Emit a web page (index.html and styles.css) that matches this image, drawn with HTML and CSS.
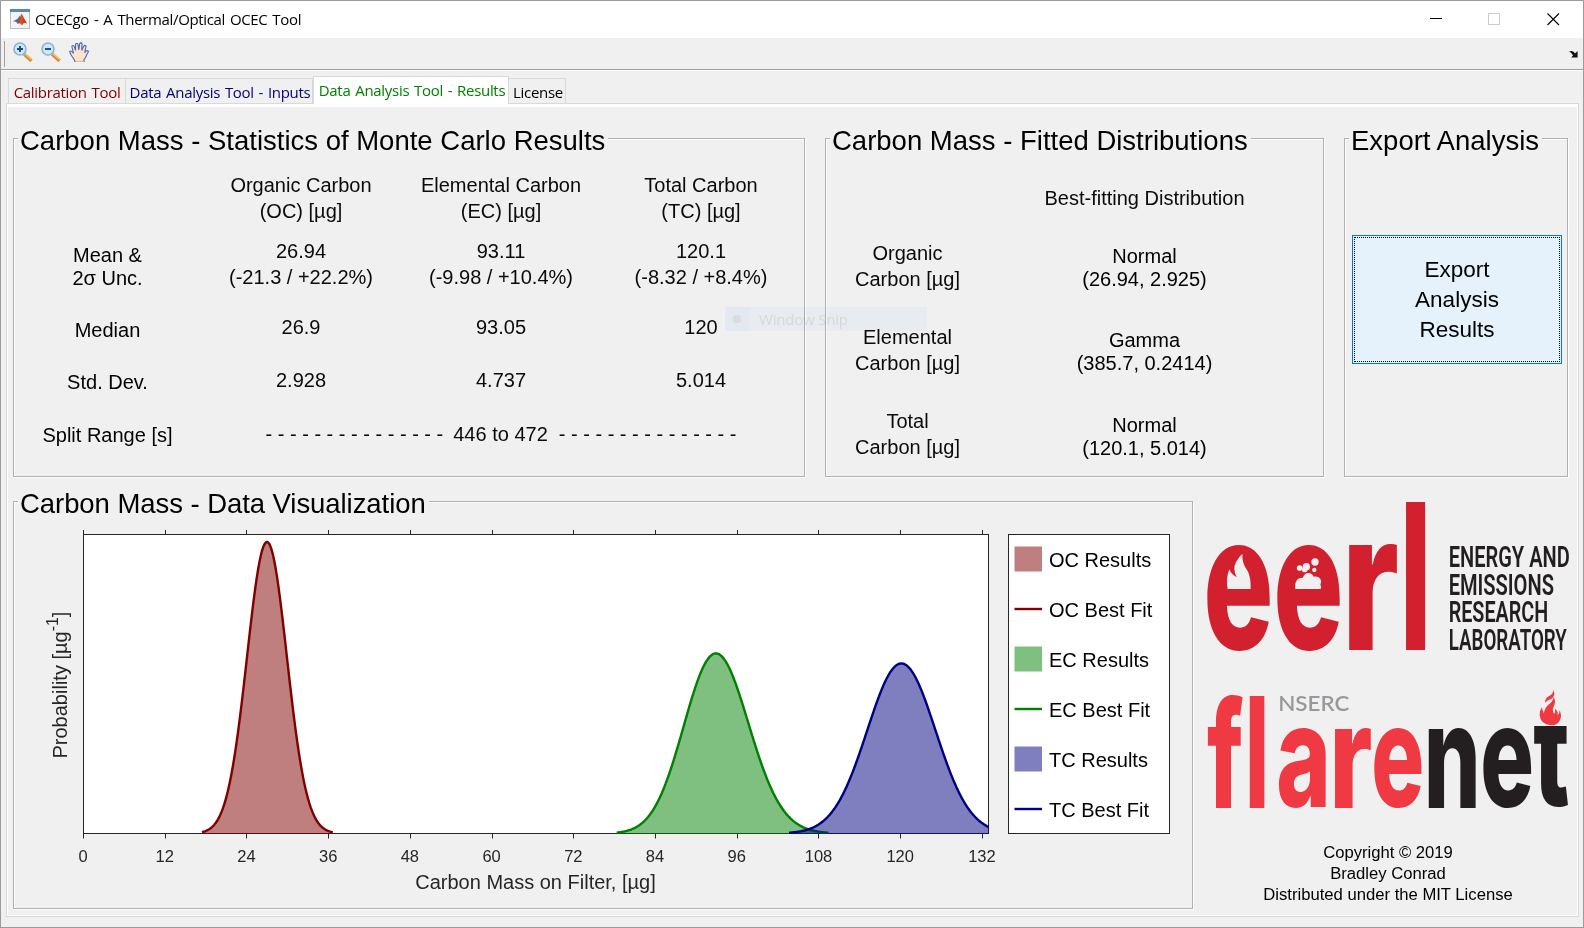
FILE: index.html
```html
<!DOCTYPE html>
<html lang="en">
<head>
<meta charset="utf-8">
<title>OCECgo - A Thermal/Optical OCEC Tool</title>
<link rel="stylesheet" href="styles.css">
</head>
<body>
<div class="window">
  <header class="titlebar">
    <svg class="app-icon" viewBox="0 0 20 20" width="20" height="20">
      <defs><linearGradient id="peak" x1="0" x2="1" y1="0" y2="0"><stop offset="0" stop-color="#b8311c"/><stop offset=".45" stop-color="#e0531e"/><stop offset="1" stop-color="#a3230f"/></linearGradient></defs>
      <rect x=".5" y=".5" width="19" height="19" fill="#f3f4f5" stroke="#b4bcc4"/>
      <rect x="0" y="0" width="20" height="3" fill="#5e87ae"/>
      <path d="M3 12.2 7.4 10 10 6.5 10.6 12 8 14.6 5.8 12.8z" fill="#2f74b5"/>
      <path d="M7 14.4c2-1.5 2.800-6.500 4.600-9.800 1.600 2.600 3.400 7 5.600 10.200-2.600-2-3.600-.8-5.400 1.800-.8-1.600-1.600-2.400-3-2.200z" fill="url(#peak)"/>
    </svg>
    <span class="title">OCECgo - A Thermal/Optical OCEC Tool</span>
    <svg class="controls" viewBox="0 0 130 14" width="130" height="14">
      <path d="M0 6.500h12" stroke="#000"/>
      <rect x="58.500" y="1.500" width="11" height="11" fill="none" stroke="#ccc"/>
      <path d="M117.500 1.500l11.500 11.500M129 1.500L117.500 13" stroke="#000" stroke-width="1.100"/>
    </svg>
  </header>

  <div class="toolbar">
    <span class="grip"></span>
    <svg viewBox="0 0 20 20" width="20" height="20">
      <path d="M11 12l7.500 6.800" stroke="#d98a2b" stroke-width="3.400"/><path d="M11.500 11.500l7 6" stroke="#f7c56e" stroke-width="1.300"/>
      <circle cx="7" cy="7" r="6" fill="#c9ecf4" stroke="#8fb0d6" stroke-width="1.600"/>
      <path d="M4 7h6M7 4v6" stroke="#1d4687" stroke-width="1.900"/>
    </svg>
    <svg viewBox="0 0 20 20" width="20" height="20">
      <path d="M11 12l7.500 6.800" stroke="#d98a2b" stroke-width="3.400"/><path d="M11.500 11.500l7 6" stroke="#f7c56e" stroke-width="1.300"/>
      <circle cx="7" cy="7" r="6" fill="#c9ecf4" stroke="#8fb0d6" stroke-width="1.600"/>
      <path d="M4 7h6" stroke="#1d4687" stroke-width="1.900"/>
    </svg>
    <svg viewBox="0 0 20 20" width="20" height="20">
      <path d="M6 20c0-2-1.200-3-2.500-5C2 12.800.3 10.600.8 9.400c.7-1 2.400.2 3.700 2L3 5.200c-.4-2 1.600-2.400 2.200-.6L6.600 8.400 6.500 2.600c0-1.900 2.200-1.900 2.500 0l.8 5.300.8-5.900c.4-1.700 2.500-1.400 2.400.4l-.3 6 2-4.200c.9-1.500 2.700-.8 2.200.9-.8 2.700-1 4-1.200 5.600.9-1.800 2.900-2.600 3.600-1.500.3 1-.9 2-1.600 3.600-.9 2.200-1.500 3.800-2.700 4.700V20z" fill="#fde3cb" stroke="#4a68ae" stroke-width="1.100"/>
      <path d="M7 19.500h7.500" stroke="#e9bd97" stroke-width="1.500"/>
    </svg>
    <svg class="dock" viewBox="0 0 9 8" width="9" height="8"><path d="M0 1.800C2 .4 4 .6 6 3.400L8.600 1v6.500H2.200L4 5.600C3 3.600 2 2.400 0 1.800z" fill="#111"/></svg>
  </div>

  <nav class="tabs">
    <span class="tab tab-calibration">Calibration Tool</span>
    <span class="tab tab-inputs">Data Analysis Tool - Inputs</span>
    <span class="tab tab-results">Data Analysis Tool - Results</span>
    <span class="tab tab-license">License</span>
  </nav>

  <main class="page">
    <div class="row row-top">
      <section class="panel panel-stats">
        <h2>Carbon Mass - Statistics of Monte Carlo Results</h2>
        <div class="stats">
          <div></div><div>Organic Carbon<br>(OC) [µg]</div><div>Elemental Carbon<br>(EC) [µg]</div><div>Total Carbon<br>(TC) [µg]</div>
          <div class="label label-mean">Mean &amp;<br>2σ Unc.</div><div>26.94<br>(-21.3 / +22.2%)</div><div>93.11<br>(-9.98 / +10.4%)</div><div>120.1<br>(-8.32 / +8.4%)</div>
          <div class="label label-median">Median</div><div>26.9</div><div>93.05</div><div>120</div>
          <div class="label label-dev">Std. Dev.</div><div>2.928</div><div>4.737</div><div>5.014</div>
          <div class="label label-split">Split Range [s]</div>
          <div class="split"><span>- - - - - - - - - - - - - - -</span><span>446 to 472</span><span>- - - - - - - - - - - - - - -</span></div>
        </div>
      </section>
      <section class="panel panel-fits">
        <h2>Carbon Mass - Fitted Distributions</h2>
        <div class="fits">
          <div></div><div>Best-fitting Distribution</div>
          <div>Organic<br>Carbon [µg]</div><div class="fit">Normal<br>(26.94, 2.925)</div>
          <div>Elemental<br>Carbon [µg]</div><div class="fit">Gamma<br>(385.7, 0.2414)</div>
          <div>Total<br>Carbon [µg]</div><div class="fit fit-total">Normal<br>(120.1, 5.014)</div>
        </div>
      </section>
      <section class="panel panel-export">
        <h2>Export Analysis</h2>
        <button class="export"><span>Export<br>Analysis<br>Results</span></button>
      </section>
    </div>

    <div class="row row-bottom">
      <section class="panel panel-chart">
        <h2>Carbon Mass - Data Visualization</h2>
        <svg class="chart" viewBox="14 518 1178 388" width="1178" height="388">
          <defs><clipPath id="plot"><rect x="83" y="534" width="906" height="301"/></clipPath></defs>
          <rect x="83.500" y="534.500" width="905" height="299" fill="#fff" stroke="#262626"/>
          <g id="ticks"></g>
          <g id="curves" clip-path="url(#plot)"></g>
          <text class="axis-title" x="535.500" y="889" text-anchor="middle">Carbon Mass on Filter, [µg]</text>
          <text class="axis-title" transform="translate(67 758.500) rotate(-90)">Probability [µg<tspan class="sup" dy="-9">-1</tspan><tspan dy="9">]</tspan></text>
          <rect x="1008.500" y="534.500" width="161" height="299" fill="#fff" stroke="#262626"/>
          <g id="legend"></g>
        </svg>
      </section>
      <aside class="brand">
        <svg viewBox="0 33 1128 930" width="376" height="310">
          <defs><clipPath id="torch"><rect x="1000" y="708" width="128" height="260"/></clipPath></defs>
          <g fill="#d2202f" class="heavy">
            <text data-box="36 158 192 328">e</text>
            <text data-box="246 158 192 328">e</text>
            <text data-box="459 158 148 323">r</text>
            <text data-box="630 33 63 448">l</text>
            <rect x="88" y="210" width="88" height="100"/>
            <rect x="298" y="210" width="88" height="100"/>
          </g>
          <g fill="#f0f0f0">
            <path d="M98 297Q92 266 103 238Q108 252 125 262Q112 238 123 216Q132 200 142 191Q141 222 158 243Q168 262 167 297z"/>
            <path d="M301 297C298 276 306 262 324 263C328 245 350 245 356 260C372 256 384 270 376 283Q380 290 377 297z"/>
            <circle cx="360" cy="216" r="11"/><circle cx="358" cy="240" r="6.500"/>
            <circle cx="334" cy="230" r="11"/><circle cx="314" cy="234" r="8.500"/><circle cx="329" cy="239" r="8"/>
          </g>
          <g fill="#231f20" class="lab">
            <text data-box="765 165 357 66">ENERGY AND</text>
            <text data-box="765 248 310 67">EMISSIONS</text>
            <text data-box="765 332 291 66">RESEARCH</text>
            <text data-box="765 415 351 66">LABORATORY</text>
          </g>
          <g fill="#f03a43" class="heavy">
            <text data-box="36 615 108 339">f</text>
            <text data-box="162 615 48 339">l</text>
            <text data-box="248 711 148 247">a</text>
            <text data-box="417 711 111 243">r</text>
            <text data-box="537 711 145 247">e</text>
          </g>
          <g fill="#231f20" class="heavy">
            <text data-box="699 711 147 243">n</text>
            <text data-box="864 711 147 247">e</text>
            <g clip-path="url(#torch)"><text data-box="1015 644 107 312">t</text></g>
          </g>
          <g fill="#97999c" class="nserc"><text data-box="255 615 207 47">NSERC</text></g>
          <g fill="#f03a43">
            <path d="M1068 706Q1036 704 1034 676Q1034 660 1041 651Q1041 662 1047 670Q1048 654 1062 643Q1074 634 1076 620Q1084 634 1076 650Q1070 662 1078 672Q1082 664 1080 656Q1090 662 1088 676Q1094 670 1094 660Q1102 680 1094 692Q1086 706 1068 706z"/>
            <path d="M1050 638Q1050 624 1062 618Q1074 612 1076 600Q1082 618 1070 626Q1056 630 1050 638z"/>
          </g>
        </svg>
        <p class="copyright">Copyright © 2019<br>Bradley Conrad<br>Distributed under the MIT License</p>
      </aside>
    </div>
  </main>
  <div class="snip"><i></i><span>Window Snip</span></div>
</div>
<script src="app.js"></script>
</body>
</html>
```
FILE: styles.css
```css
* { box-sizing: border-box; }
body {
  margin: 0;
  height: 928px;
  padding: 1px;
  overflow: hidden;
  background: #9b9b9b;
  font-family: "Liberation Sans", Arial, sans-serif;
  font-size: 20px;
  line-height: 26px;
  color: #0a0a0a;
}
.window { position: relative; height: 926px; width: 1582px; background: #f0f0f0; }

.titlebar { display: flex; height: 37px; background: #fff; padding-left: 9px; font-family: "Open Sans", "Noto Sans", sans-serif; }
.app-icon { margin-top: 8px; }
.title { margin-left: 5px; font-size: 15px; line-height: 37px; letter-spacing: -0.35px; word-spacing: 1.4px; color: #000; white-space: nowrap; }
.controls { margin: 11px 23px 0 auto; }

.toolbar { display: flex; height: 33px; padding: 3px 5px 0 3px; border-bottom: 1px solid #fff; box-shadow: inset 0 -1px #a0a0a0; }
.toolbar svg { margin: 1px 8px 0 0; }
.grip { width: 1px; height: 26px; margin-right: 8px; background: #a0a0a0; }
.toolbar .dock { margin: 9px 0 0 auto; }

.tabs { display: flex; align-items: flex-end; height: 32px; padding-left: 7px; font-family: "Open Sans", "Noto Sans", sans-serif; font-size: 15px; }
.tab { height: 25px; border: 1px solid #d9d9d9; border-bottom: 0; line-height: 27px; text-align: center; white-space: nowrap; letter-spacing: -0.3px; word-spacing: 1.2px; }
.tab-calibration { width: 118px; color: #800000; }
.tab-inputs { width: 187px; padding-left: 2px; border-left: 0; color: #000080; }
.tab-results { position: relative; width: 196px; height: 28px; margin-bottom: -1px; padding-left: 2px; background: #fff; line-height: 27px; color: #008000; }
.tab-license { width: 57px; padding-left: 2px; border-left: 0; color: #000; }

.page {
  width: 1573px;
  height: 814px;
  margin-left: 5px;
  padding: 34px 0 0 6px;
  border: 1px solid #d9d9d9;
  box-shadow: inset 1px 3px #fff, inset -1px -1px #fff;
}
.row { display: flex; }
.row-top { gap: 20px; height: 339px; }
.row-bottom { gap: 2px; height: 408px; margin-top: 24px; }

.panel { flex: none; border: 1px solid #b0b0b0; box-shadow: 1px 1px #fff, inset 1px 1px #fff; }
.panel h2 {
  width: max-content;
  height: 30px;
  margin: -14px 0 0 4px;
  padding: 1px 3px 0 2px;
  background: #f0f0f0;
  font-size: 27.5px;
  font-weight: 400;
  line-height: 30px;
  white-space: nowrap;
  color: #000;
}
.panel-stats { width: 792px; }
.panel-fits { width: 499px; }
.panel-export { width: 224px; }
.panel-chart { width: 1180px; }
.panel-chart h2 { letter-spacing: -0.06px; }

.stats { display: grid; grid-template-columns: 187px 200px 200px 200px; grid-template-rows: 66px 76px 53px 54px 30px; padding-top: 17px; text-align: center; }
.label { color: #000; }
.label-mean { padding-top: 6px; line-height: 23px; }
.label-median { padding-top: 3px; }
.label-dev { padding-top: 2px; }
.label-split { padding-top: 1px; }
.split { grid-column: 2 / 5; display: flex; justify-content: center; gap: 10px; white-space: nowrap; }
.split span:last-child { margin-left: 1px; }

.fits { display: grid; grid-template-columns: 163px 311px; grid-template-rows: 55px 84px 84px 60px; padding-top: 30px; text-align: center; }
.fit { padding-top: 5px; line-height: 23px; color: #000; }
.fit-total { padding-top: 6px; }

.export {
  display: block;
  width: 210px;
  height: 129px;
  margin: 80px 0 0 7px;
  padding: 1px;
  border: 1px solid #0078d7;
  background: #e5f1fb;
  font: 22.5px/30px "Liberation Sans", Arial, sans-serif;
  color: #000;
}
.export span { display: grid; place-content: center; height: 100%; padding-top: 1px; border: 1px dotted #000; }

.chart { display: block; font-family: "Liberation Sans", Arial, sans-serif; }
.tick { font-size: 16.5px; fill: #262626; text-anchor: middle; }
.axis-title { font-size: 20px; fill: #262626; }
.sup { font-size: 16px; }
.key { font-size: 20px; fill: #000; }

.brand { width: 376px; }
.brand svg { display: block; overflow: visible; }
.heavy { font-family: Inter, sans-serif; font-weight: 800; font-size: 400px; }
.lab { font-family: Roboto, sans-serif; font-weight: 600; font-size: 90px; }
.nserc { font-family: Lato, sans-serif; font-weight: 600; font-size: 60px; }
.copyright { margin: 31px 0 0 10px; font-size: 16.65px; line-height: 21px; text-align: center; color: #000; }

.snip {
  position: absolute;
  left: 724px;
  top: 306px;
  display: flex;
  align-items: center;
  width: 202px;
  height: 24px;
  background: #f7fbff;
  mix-blend-mode: multiply;
  font: 15px/24px "Open Sans", "Noto Sans", sans-serif;
  letter-spacing: -0.2px;
  color: #e6e6e6;
}
.snip i { width: 24px; height: 24px; background: radial-gradient(circle, #e8eaec 4px, #f1f8ff 4.6px); }
.snip span { margin-left: 10px; }
```
FILE: app.js
```js
const NS = 'http://www.w3.org/2000/svg';
function add(parent, tag, attrs, text) {
  const el = document.createElementNS(NS, tag);
  for (const k in attrs) el.setAttribute(k, attrs[k]);
  if (text) el.textContent = text;
  parent.appendChild(el);
  return el;
}

// Axis: 12 µg steps along the bottom and top edges
const X0 = 83.5, BASE = 833.5, PER_UG = 6.81;
const px = v => X0 + v * PER_UG;
const ticks = document.getElementById('ticks');
for (let v = 0; v <= 132; v += 12) {
  const x = Math.floor(px(v)) + 0.5;
  add(ticks, 'path', { d: `M${x} 530V534M${x} 834V838.5`, stroke: '#262626' });
  add(ticks, 'text', { class: 'tick', x: px(v) - 0.5, y: 862 }, String(v));
}

const normal = (m, s) => x => Math.exp(-((x - m) ** 2) / (2 * s * s)) / (s * Math.sqrt(2 * Math.PI));
const gamma = (k, t) => {
  const mode = (k - 1) * t;
  const peak = normal(0, Math.sqrt(k - 1) * t)(0);
  return x => peak * Math.exp((k - 1) * Math.log(x / mode) - (x - mode) / t);
};
const series = [
  { name: 'OC', pdf: normal(26.94, 2.925), from: 17.4, to: 36.7, color: '#800000' },
  { name: 'EC', pdf: gamma(385.7, 0.2414), from: 78.3, to: 109.4, color: '#008000' },
  { name: 'TC', pdf: normal(120.1, 5.014), from: 103.6, to: 135, color: '#000080' }
];
const HEIGHT = 291.5 / normal(0, 2.925)(0);
const curves = document.getElementById('curves');
const legend = document.getElementById('legend');
series.forEach((s, i) => {
  const pts = [];
  for (let x = s.from; x <= s.to; x += 0.1) pts.push(`${px(x).toFixed(2)} ${(BASE - s.pdf(x) * HEIGHT).toFixed(2)}`);
  const line = 'M' + pts.join('L');
  add(curves, 'path', { d: `${line}L${px(s.to)} ${BASE + .5}L${px(s.from)} ${BASE + .5}z`, fill: s.color, 'fill-opacity': 0.5 });
  add(curves, 'path', { d: line, fill: 'none', stroke: s.color, 'stroke-width': 2.4 });
  const y = 559 + i * 100;
  add(legend, 'rect', { x: 1014.5, y: y - 12.5, width: 27.5, height: 25, fill: s.color, 'fill-opacity': 0.5 });
  add(legend, 'text', { class: 'key', x: 1049, y: y + 8 }, s.name + ' Results');
  add(legend, 'path', { d: `M1014.5 ${y + 50}H1042`, stroke: s.color, 'stroke-width': 2.4 });
  add(legend, 'text', { class: 'key', x: 1049, y: y + 58 }, s.name + ' Best Fit');
});

// Condense logo lettering so its ink fills each box (x y width height)
const ctx = document.createElement('canvas').getContext('2d');
document.querySelectorAll('[data-box]').forEach(t => {
  const [x, y, w, h] = t.dataset.box.split(' ').map(Number);
  const cs = getComputedStyle(t);
  ctx.font = `${cs.fontWeight} ${cs.fontSize} ${cs.fontFamily}`;
  const m = ctx.measureText(t.textContent);
  const sx = w / (m.actualBoundingBoxLeft + m.actualBoundingBoxRight);
  const sy = h / (m.actualBoundingBoxAscent + m.actualBoundingBoxDescent);
  t.setAttribute('transform', `translate(${x + m.actualBoundingBoxLeft * sx} ${y + m.actualBoundingBoxAscent * sy}) scale(${sx} ${sy})`);
});
```
